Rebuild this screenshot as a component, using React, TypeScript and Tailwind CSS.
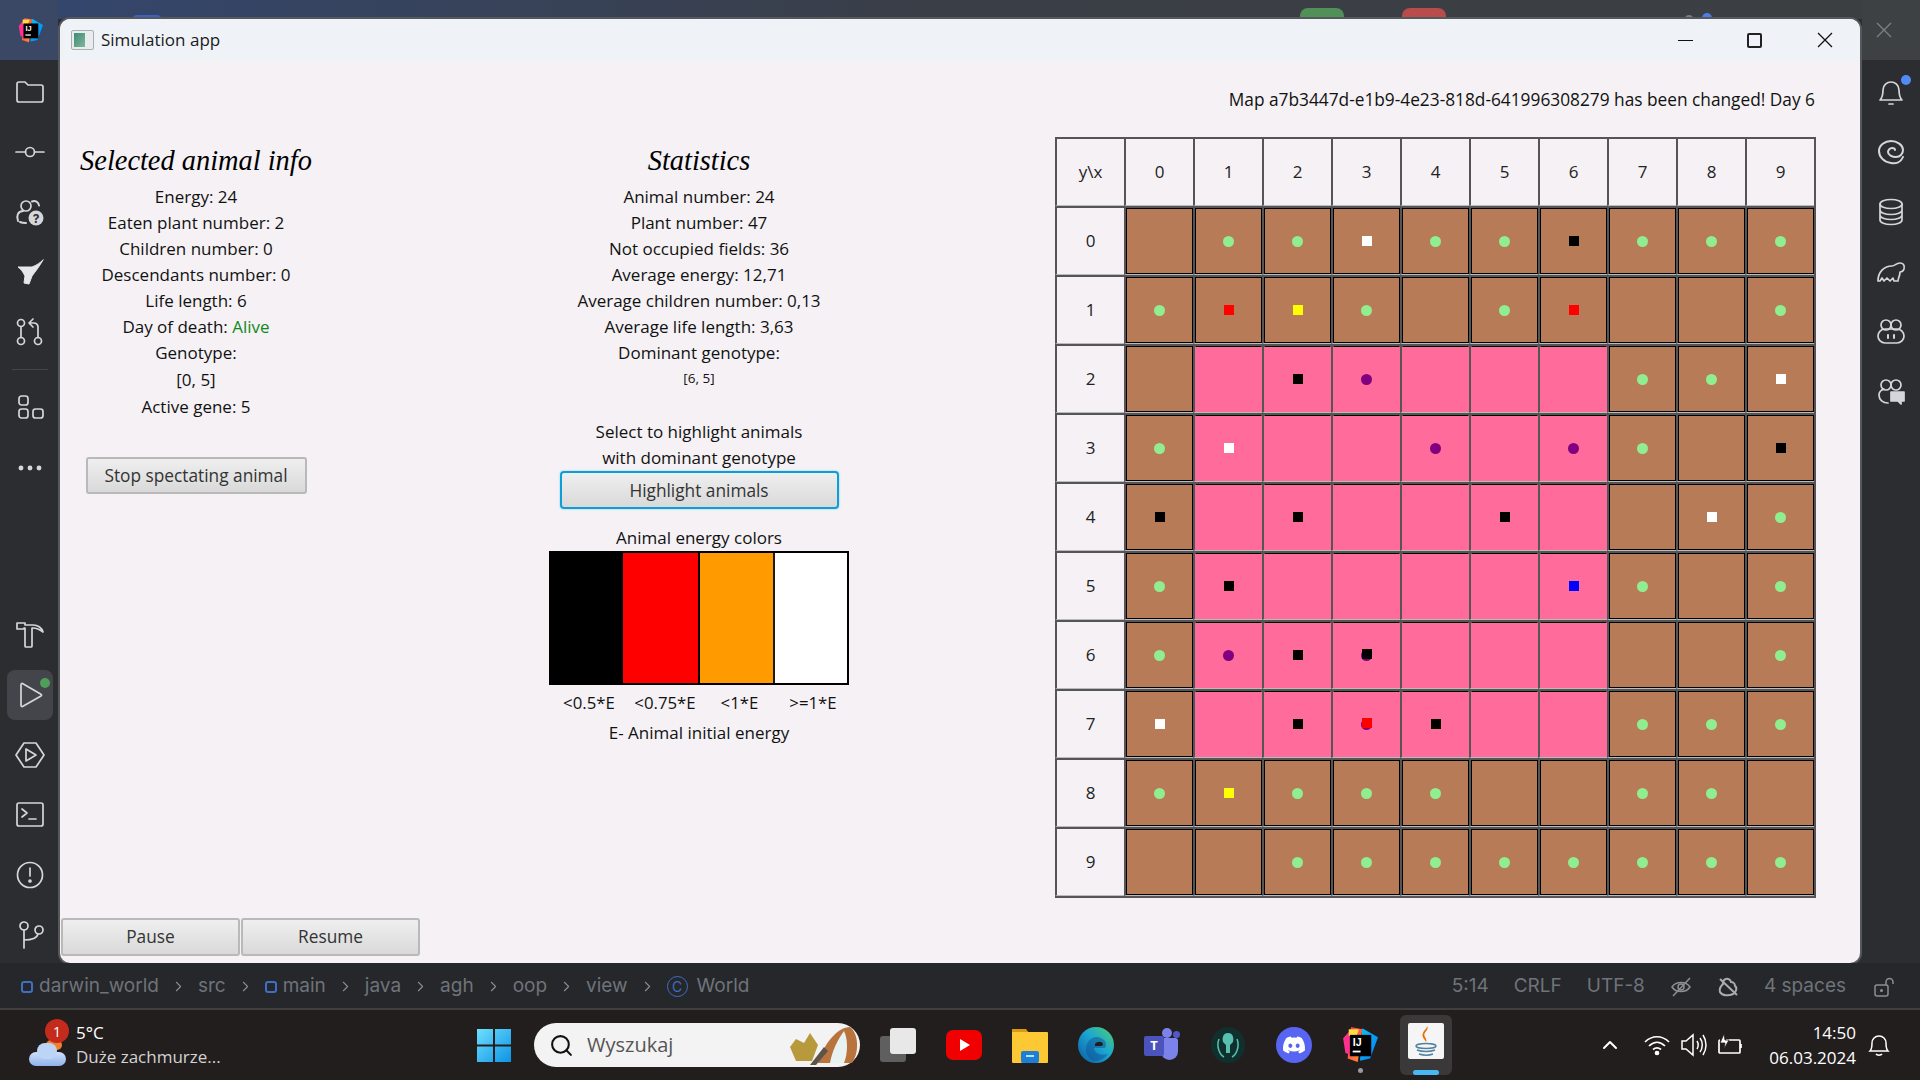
import type { ReactNode } from "react";
import { FaDiscord } from "react-icons/fa";
import { ChevronRight, ChevronUp, Search } from "lucide-react";

const ICON = "#d4d6db";

// g plant, p purple animal, letters = animal energy colour, + pink jungle
const MAP = [
  [".", "g", "g", "w", "g", "g", "k", "g", "g", "g"],
  ["g", "r", "y", "g", ".", "g", "r", ".", ".", "g"],
  [".", "+", "+k", "+p", "+", "+", "+", "g", "g", "w"],
  ["g", "+w", "+", "+", "+p", "+", "+p", "g", ".", "k"],
  ["k", "+", "+k", "+", "+", "+k", "+", ".", "w", "g"],
  ["g", "+k", "+", "+", "+", "+", "+b", "g", ".", "g"],
  ["g", "+p", "+k", "+pk", "+", "+", "+", ".", ".", "g"],
  ["w", "+", "+k", "+pr", "+k", "+", "+", "g", "g", "g"],
  ["g", "y", "g", "g", "g", ".", ".", "g", "g", "."],
  [".", ".", "g", "g", "g", "g", "g", "g", "g", "g"],
];

function Mark({ code }: { code: string }) {
  const kind = code.replace("+", "");
  if (kind === "g") return <span className="h-[11px] w-[11px] rounded-full bg-[#90ee90]" />;
  if (kind === "p") return <span className="h-[11px] w-[11px] rounded-full bg-[#800080]" />;
  if (kind === "pk" || kind === "pr") {
    return (
      <span className="relative h-[11px] w-[11px] rounded-full bg-[#800080]">
        <span className={`absolute left-[1px] top-[-1px] h-[10px] w-[10px] ${kind === "pk" ? "bg-black" : "bg-[#ff0000]"}`} />
      </span>
    );
  }
  if (kind === "k") return <span className="ml-[1px] mt-[-1px] h-[10px] w-[10px] bg-black" />;
  if (kind === "w") return <span className="ml-[1px] mt-[-1px] h-[10px] w-[10px] bg-white" />;
  if (kind === "r") return <span className="ml-[1px] mt-[-1px] h-[10px] w-[10px] bg-[#ff0000]" />;
  if (kind === "y") return <span className="ml-[1px] mt-[-1px] h-[10px] w-[10px] bg-[#ffff00]" />;
  if (kind === "b") return <span className="ml-[1px] mt-[-1px] h-[10px] w-[10px] bg-[#0000ff]" />;
  return null;
}

function HeaderCell({ label }: { label: string }) {
  return (
    <div className="flex items-center justify-center border-l-2 border-t-2 border-b border-l-[#555555] border-t-[#555555] border-b-[#bbbbbb] text-[17px] text-[#222222]">
      {label}
    </div>
  );
}

function MapCell({ code }: { code: string }) {
  const jungle = code.startsWith("+");
  return (
    <div className="border-l-2 border-t-2 border-b border-l-[#555555] border-t-[#555555] border-b-[#bbbbbb]">
      <div
        className={`flex h-full w-full items-center justify-center border ${
          jungle ? "border-transparent border-t-black bg-[#ff6b9b]" : "border-black bg-[#b87b57]"
        }`}
      >
        <Mark code={code} />
      </div>
    </div>
  );
}

function MapGrid() {
  const heads = ["0", "1", "2", "3", "4", "5", "6", "7", "8", "9"];
  return (
    <div className="grid w-[761px] grid-cols-[repeat(11,69px)] grid-rows-[repeat(11,69px)] border-b-2 border-r-2 border-[#555555]">
      <HeaderCell label="y\x" />
      {heads.map((h) => (
        <HeaderCell key={h} label={h} />
      ))}
      {MAP.map((row, y) => (
        <div key={y} className="contents">
          <HeaderCell label={String(y)} />
          {row.map((code, x) => (
            <MapCell key={x} code={code} />
          ))}
        </div>
      ))}
    </div>
  );
}

function FxButton({ children, className }: { children: ReactNode; className: string }) {
  return (
    <button className={`rounded-[3px] border-2 border-[#b9b9b9] bg-gradient-to-b from-[#efefef] to-[#d9d9d9] text-[17.3px] text-[#333333] ${className}`}>
      {children}
    </button>
  );
}

function Heading({ children }: { children: ReactNode }) {
  return <h2 className="pt-[1px] font-['Liberation_Serif',serif] text-[28.4px] italic leading-[46px] text-black">{children}</h2>;
}

function LeftInfo() {
  const lines = ["Energy: 24", "Eaten plant number: 2", "Children number: 0", "Descendants number: 0", "Life length: 6"];
  return (
    <div className="flex w-[272px] flex-col items-center">
      <Heading>Selected animal info</Heading>
      {lines.map((l) => (
        <p key={l} className="h-[26px] leading-[26px]">{l}</p>
      ))}
      <p className="h-[26px] leading-[26px]">
        Day of death: <span className="text-[#0f8a1c]">Alive</span>
      </p>
      <p className="h-[26px] leading-[26px]">Genotype:</p>
      <p className="h-[27px] leading-[27px]">[0, 5]</p>
      <p className="h-[28px] leading-[28px]">Active gene: 5</p>
      <FxButton className="mt-[36px] h-[37px] w-[221px]">Stop spectating animal</FxButton>
    </div>
  );
}

function Stats() {
  const lines = [
    "Animal number: 24",
    "Plant number: 47",
    "Not occupied fields: 36",
    "Average energy: 12,71",
    "Average children number: 0,13",
    "Average life length: 3,63",
    "Dominant genotype:",
  ];
  return (
    <div className="flex w-[320px] flex-col items-center">
      <Heading>Statistics</Heading>
      {lines.map((l) => (
        <p key={l} className="h-[26px] leading-[26px]">{l}</p>
      ))}
      <p className="h-[24px] text-[13.5px] leading-[24px]">[6, 5]</p>
      <p className="mt-[29px] h-[26px] leading-[26px]">Select to highlight animals</p>
      <p className="h-[26px] leading-[26px]">with dominant genotype</p>
      <button className="h-[38px] w-[279px] rounded-[4px] border-2 border-[#0a9fd6] bg-gradient-to-b from-[#efefef] to-[#d9d9d9] pt-[2px] text-[17.3px] text-[#333333] shadow-[0_0_2px_#7fcbe8]">
        Highlight animals
      </button>
      <p className="mt-[16px] h-[26px] leading-[26px]">Animal energy colors</p>
      <div className="flex h-[134px] w-[300px] border-2 border-black">
        <div className="w-[72px] bg-black" />
        <div className="w-[77px] border-r-2 border-black bg-[#ff0000]" />
        <div className="w-[75px] border-r-2 border-[#1a1a1a] bg-[#ff9a00]" />
        <div className="flex-1 bg-white" />
      </div>
      <div className="mt-[5px] flex w-[300px] text-[16.8px]">
        <span className="w-[80px] text-center">&lt;0.5*E</span>
        <span className="w-[72px] text-center">&lt;0.75*E</span>
        <span className="w-[77px] text-center">&lt;1*E</span>
        <span className="w-[70px] text-center">&gt;=1*E</span>
      </div>
      <p className="mt-[5px] leading-[26px]">E- Animal initial energy</p>
    </div>
  );
}

function WindowTitleBar() {
  return (
    <div className="flex h-[42px] shrink-0 items-center rounded-t-[10px] bg-[#eff3f8] pl-[11px]">
      <div className="flex h-[20px] w-[23px] rounded-[2px] border border-[#a8b0b0] bg-[#e8ecec] p-[2px]">
        <div className="h-full w-[11px] bg-gradient-to-br from-[#3d8a78] to-[#7fb89a]" />
      </div>
      <span className="ml-[7px] text-[17px] text-[#1a1a1a]">Simulation app</span>
      <div className="ml-auto flex items-center">
        <span className="mr-[54px] h-[1px] w-[15px] bg-[#111111]" />
        <span className="mr-[55px] h-[15px] w-[15px] rounded-[2px] border-2 border-[#222222]" />
        <svg width="16" height="16" viewBox="0 0 16 16" className="mr-[27px]" stroke="#111111" strokeWidth="1.3">
          <path d="M1 1l14 14M15 1L1 15" />
        </svg>
      </div>
    </div>
  );
}

function SimulationWindow() {
  return (
    <div className="flex min-h-0 flex-1 flex-col rounded-[10px] bg-[#f5f1f5] font-['Open_Sans',sans-serif] text-[17px] text-[#111111] shadow-[0_0_0_2px_#55585c]">
      <WindowTitleBar />
      <p className="mt-[26px] h-[26px] pr-[45px] text-right text-[17.3px] leading-[26px]">
        Map a7b3447d-e1b9-4e23-818d-641996308279 has been changed! Day 6
      </p>
      <div className="mt-[24px] flex flex-1">
        <LeftInfo />
        <div className="ml-[207px]">
          <Stats />
        </div>
        <div className="ml-[196px]">
          <MapGrid />
        </div>
      </div>
      <div className="mb-[7px] flex gap-[1px] pl-[1px]">
        <FxButton className="h-[38px] w-[179px]">Pause</FxButton>
        <FxButton className="h-[38px] w-[179px]">Resume</FxButton>
      </div>
    </div>
  );
}

function Ico({ children, size = 30 }: { children: ReactNode; size?: number }) {
  return (
    <svg width={size} height={size} viewBox="0 0 30 30" fill="none" stroke={ICON} strokeWidth="1.7" strokeLinecap="round" strokeLinejoin="round">
      {children}
    </svg>
  );
}

function Slot({ children, active }: { children: ReactNode; active?: boolean }) {
  return (
    <div className={`relative flex h-[50px] w-[46px] shrink-0 items-center justify-center rounded-[8px] ${active ? "bg-[#43454a]" : ""}`}>
      {children}
    </div>
  );
}

function LeftRail() {
  return (
    <div className="flex w-[58px] shrink-0 flex-col bg-[#2b2d30] pb-[3px]">
      <div className="flex h-[60px] w-full shrink-0 items-center justify-center bg-[#3a4866] pl-[2px]">
        <IjLogo size={25} />
      </div>
      <div className="flex min-h-0 flex-1 flex-col items-center pl-[2px]">
        <div className="mt-[7px] flex flex-col gap-[10px]">
          <Slot>
            <Ico><path d="M2 7a2 2 0 0 1 2-2h6l3 3h13a2 2 0 0 1 2 2v13a2 2 0 0 1-2 2H4a2 2 0 0 1-2-2z" /></Ico>
          </Slot>
          <Slot>
            <Ico><circle cx="15" cy="15" r="4.5" /><path d="M1 15h9.5M19.5 15H29" /></Ico>
          </Slot>
          <Slot>
            <Ico>
              <circle cx="11" cy="9" r="5" />
              <path d="M17 4.500a5 5 0 0 1 7 4M3 24c-2-5 0-10 5-10M5 25c2 1 4 1 6 1" strokeWidth="2" />
              <circle cx="21" cy="21" r="7.500" fill={ICON} stroke="none" />
              <text x="21" y="25.500" textAnchor="middle" fontSize="12" fontWeight="700" fill="#2b2d30" stroke="none" fontFamily="Inter">?</text>
            </Ico>
          </Slot>
          <Slot>
            <Ico><path d="M28 3c-3 3-6 5-11 7L3 10c3 2 5 5 7 9l-1 7 5 1 3-8c3-4 7-9 11-16z" fill="#e6e7ea" stroke="#e6e7ea" strokeWidth="1" /></Ico>
          </Slot>
          <Slot>
            <Ico>
              <circle cx="6" cy="6" r="3.5" /><circle cx="6" cy="24" r="3.5" /><circle cx="23" cy="24" r="3.5" />
              <path d="M6 9.500v11M23 20.500V10a4 4 0 0 0-4-4h-4M18 2l-4 4 4 4" />
            </Ico>
          </Slot>
        </div>
        <div className="mt-[12px] h-[1px] w-[36px] bg-[#43454a]" />
        <div className="mt-[13px] flex flex-col gap-[10px]">
          <Slot>
            <Ico>
              <rect x="4" y="3" width="9" height="9" rx="2.5" /><rect x="4" y="16" width="9" height="9" rx="2.5" /><rect x="18" y="16" width="10" height="9" rx="2.5" />
            </Ico>
          </Slot>
          <Slot>
            <Ico><circle cx="6" cy="15" r="1.6" fill={ICON} /><circle cx="15" cy="15" r="1.6" fill={ICON} /><circle cx="24" cy="15" r="1.6" fill={ICON} /></Ico>
          </Slot>
        </div>
        <div className="flex-1" />
        <div className="flex flex-col gap-[10px]">
          <Slot>
            <Ico><path d="M2 3h8v2h8c5 0 9 3 10 7-4-3-7-4-10-4h-1v18a1 1 0 0 1-1 1h-5a1 1 0 0 1-1-1V8H9v1H2z" /></Ico>
          </Slot>
          <Slot active>
            <Ico><path d="M6 4.500v21a1 1 0 0 0 1.500.9L26 16a1 1 0 0 0 0-1.800L7.500 3.600A1 1 0 0 0 6 4.500z" /></Ico>
            <span className="absolute right-[3px] top-[8px] h-[10px] w-[10px] rounded-full bg-[#4f9e5a]" />
          </Slot>
          <Slot>
            <Ico><path d="M9 3h12l8 12-8 12H9L1 15z" /><path d="M11 9v12l10-6z" /></Ico>
          </Slot>
          <Slot>
            <Ico><rect x="2" y="3" width="26" height="23" rx="2" /><path d="M7 9l5 4-5 4M14 19h7" /></Ico>
          </Slot>
          <Slot>
            <Ico><circle cx="15" cy="15" r="12.500" /><path d="M15 8v8" /><circle cx="15" cy="21" r="1" fill={ICON} /></Ico>
          </Slot>
          <Slot>
            <Ico><circle cx="9" cy="6" r="4" /><circle cx="24" cy="10" r="4" /><path d="M9 10v18M9 20c7 0 13-1 14-6" /></Ico>
          </Slot>
        </div>
      </div>
    </div>
  );
}

function RightRail() {
  return (
    <div className="flex w-[58px] shrink-0 flex-col items-center bg-[#2b2d30]">
      <div className="flex h-[60px] w-full shrink-0 items-center justify-center bg-[#3e4144] pr-[14px]">
        <svg width="16" height="16" viewBox="0 0 16 16" stroke="#7c7f83" strokeWidth="1.4"><path d="M1 1l14 14M15 1L1 15" /></svg>
      </div>
      <div className="mt-[7px] flex flex-col gap-[10px]">
        <Slot>
          <Ico><path d="M4 23c3-3 3-6 3-10 0-5 4-8 8-8 4 0 8 3 8 8 0 4 0 7 3 10zM13 27h4" /></Ico>
          <span className="absolute right-[3px] top-[8px] h-[10px] w-[10px] rounded-full bg-[#548af7]" />
        </Slot>
        <Slot>
          <Ico><path d="M27 20c-2 5-7 7-12 6C8 25 3 20 3 14 3 8 9 4 15 4c6 0 12 4 12 9 0 4-3 7-7 7-4 0-8-2-8-5 0-2 2-4 4-4 2 0 3 1 3 2" strokeWidth="2" /></Ico>
        </Slot>
        <Slot>
          <Ico><ellipse cx="15" cy="7" rx="11" ry="4.500" /><path d="M4 7v16c0 2.500 5 4.500 11 4.500s11-2 11-4.500V7M4 13c0 2.500 5 4.500 11 4.500s11-2 11-4.500M4 18c0 2.500 5 4.500 11 4.500s11-2 11-4.500" /></Ico>
        </Slot>
        <Slot>
          <Ico><path d="M2 24c0-9 6-15 14-15 3 0 4-3 8-3 3 0 5 2 4 6-1 3-3 3-4 3 0 4-2 6-2 9h-4l-1-3-3 3-3-3-3 3-2-3-2 3z" /></Ico>
        </Slot>
        <Slot>
          <Ico>
            <circle cx="10" cy="8" r="5" /><circle cx="20" cy="8" r="5" />
            <rect x="2" y="12" width="26" height="14" rx="7" /><path d="M12 18v3M18 18v3" strokeWidth="2" />
          </Ico>
        </Slot>
        <Slot>
          <Ico>
            <circle cx="10" cy="8" r="5" /><circle cx="20" cy="8" r="5" />
            <path d="M3 18c0 5 4 8 9 8M3 18c0-3 2-5 5-6" />
            <path d="M15 15h13v9h-3v3l-3-3h-7z" fill={ICON} />
          </Ico>
        </Slot>
      </div>
    </div>
  );
}

function Crumb({ children, mod }: { children: ReactNode; mod?: boolean }) {
  return (
    <span className="flex items-center gap-[6px]">
      {mod && <span className="h-[12px] w-[12px] rounded-[3px] border-2 border-[#3d6fc4]" />}
      {children}
    </span>
  );
}

function Sep() {
  return <ChevronRight size={17} strokeWidth={1.5} className="mx-[11px] text-[#8a8e94]" />;
}

function StatusBar() {
  return (
    <div className="flex h-[47px] shrink-0 items-center border-b-2 border-b-[#3f3f3f] bg-[#25272b] pl-[21px] pr-[25px] pt-[2px] font-['Inter',sans-serif] text-[19px] text-[#6f737a]">
      <Crumb mod>darwin_world</Crumb>
      <Sep />
      <Crumb>src</Crumb>
      <Sep />
      <Crumb mod>main</Crumb>
      <Sep />
      <Crumb>java</Crumb>
      <Sep />
      <Crumb>agh</Crumb>
      <Sep />
      <Crumb>oop</Crumb>
      <Sep />
      <Crumb>view</Crumb>
      <Sep />
      <span className="flex items-center gap-[9px]">
        <span className="flex h-[21px] w-[21px] items-center justify-center rounded-full border-[1.5px] border-[#3d6fc4] text-[14px] text-[#3d6fc4]">C</span>
        World
      </span>
      <div className="ml-auto flex items-center gap-[25px]">
        <span>5:14</span>
        <span>CRLF</span>
        <span>UTF-8</span>
        <svg width="22" height="22" viewBox="0 0 22 22" fill="none" stroke="#8c8f94" strokeWidth="1.5">
          <path d="M2 11c4-6 14-6 18 0-4 6-14 6-18 0z" /><circle cx="11" cy="11" r="3" /><path d="M3 20L20 2" />
        </svg>
        <svg width="22" height="22" viewBox="0 0 22 22" fill="none" stroke="#a8abaf" strokeWidth="2">
          <path d="M6 8a4 4 0 0 1 8-2 4 4 0 0 1 4 4c2 1 2 6-2 8-4 2-11 2-13-2-1-3 1-6 3-8zM3 3l17 16" />
        </svg>
        <span className="mr-[2px]">4 spaces</span>
        <svg width="22" height="22" viewBox="0 0 22 22" fill="none" stroke="#8c8f94" strokeWidth="1.5">
          <rect x="2" y="9" width="13" height="11" rx="2" /><path d="M13 9V6a3.500 3.500 0 0 1 7 0v2" /><circle cx="8.500" cy="14.500" r="0.800" />
        </svg>
      </div>
    </div>
  );
}

function IjLogo({ size }: { size: number }) {
  return (
    <svg width={size} height={size} viewBox="0 0 32 32">
      <defs>
        <linearGradient id="ijA" x1="0" y1="0" x2="1" y2="1">
          <stop offset="0" stopColor="#fe2857" />
          <stop offset="1" stopColor="#fe9a2e" />
        </linearGradient>
        <linearGradient id="ijB" x1="0" y1="0" x2="1" y2="1">
          <stop offset="0" stopColor="#07c3f2" />
          <stop offset="1" stopColor="#087cfa" />
        </linearGradient>
      </defs>
      <path d="M8 0l10 2-4 29-9-3z" fill="url(#ijA)" />
      <path d="M18 1l14 8-7 19-9 2z" fill="url(#ijB)" />
      <path d="M1 10l8-9 7 8-7 16-6-2z" fill="#ff318c" />
      <path d="M6 2l9 0-2 6H6z" fill="#fcdc3e" />
      <rect x="7" y="7" width="19" height="19" fill="#000000" />
      <text x="9.500" y="17" fontSize="9.500" fontWeight="700" fill="#ffffff" fontFamily="Liberation Sans">IJ</text>
      <rect x="9.500" y="21" width="7" height="1.600" fill="#ffffff" />
    </svg>
  );
}

function TaskSlot({ children, className = "" }: { children: ReactNode; className?: string }) {
  return <div className={`relative flex h-[70px] w-[66px] shrink-0 items-center justify-center ${className}`}>{children}</div>;
}

function Taskbar() {
  return (
    <div className="flex h-[70px] shrink-0 items-center bg-[#231e1e] font-['Open_Sans',sans-serif] text-white">
      <div className="flex w-[477px] shrink-0 items-center pl-[28px]">
        <div className="relative h-[50px] w-[48px]">
          <span className="absolute left-[18px] top-[20px] h-[10px] w-[16px] rounded-full bg-[#f08030]" />
          <span className="absolute bottom-[4px] left-[1px] h-[14px] w-[37px] rounded-[7px] bg-gradient-to-b from-[#cfe0fa] to-[#8fb3ea]" />
          <span className="absolute bottom-[11px] left-[9px] h-[16px] w-[20px] rounded-full bg-[#bcd4f6]" />
          <span className="absolute left-[17px] top-[-1px] flex h-[24px] w-[24px] items-center justify-center rounded-full bg-[#c42b1c] text-[14px]">1</span>
        </div>
        <div className="flex flex-col text-[17px] leading-[24px]">
          <span>5°C</span>
          <span className="text-[#d2d2d2]">Duże zachmurze...</span>
        </div>
      </div>
      <svg width="34" height="34" viewBox="0 0 34 34" className="shrink-0">
        <defs>
          <linearGradient id="win" x1="0" y1="0" x2="1" y2="1">
            <stop offset="0" stopColor="#6fe0fc" />
            <stop offset="1" stopColor="#0c93e6" />
          </linearGradient>
        </defs>
        <path d="M0 1h16v15.500H0zM18 1h16v15.500H18zM0 18.500h16V34H0zM18 18.500h16V34H18z" fill="url(#win)" />
      </svg>
      <div className="ml-[23px] flex h-[44px] w-[326px] shrink-0 items-center rounded-full bg-[#f3f3f3] pl-[15px] text-[20px] text-[#555555]">
        <Search size={25} strokeWidth={2} className="text-[#111111]" />
        <span className="ml-[13px]">Wyszukaj</span>
        <svg width="76" height="44" viewBox="0 0 76 44" className="ml-auto">
          <path d="M6 24l6-8 8 4 6-10 8 12-6 16H12z" fill="#b89a3c" />
          <path d="M34 40c6-20 20-36 32-36 8 6 10 24 2 36z" fill="#b8743c" />
          <path d="M46 40c2-12 8-24 14-32 4 8 4 22 0 32z" fill="#e8f2f0" />
          <path d="M26 42l14-18 4 4-12 14z" fill="#5c5448" />
        </svg>
      </div>
      <div className="ml-[5px] flex">
        <TaskSlot>
          <span className="relative h-[34px] w-[36px]">
            <span className="absolute bottom-0 left-0 h-[26px] w-[26px] rounded-[3px] bg-[#5f5f5f]" />
            <span className="absolute right-0 top-0 h-[26px] w-[26px] rounded-[3px] bg-[#e8e8e8]" />
          </span>
        </TaskSlot>
        <TaskSlot>
          <svg width="36" height="30" viewBox="0 0 36 30">
            <rect width="36" height="30" rx="7" fill="#f00000" />
            <path d="M14 9l10 6-10 6z" fill="#ffffff" />
          </svg>
        </TaskSlot>
        <TaskSlot>
          <svg width="36" height="36" viewBox="0 0 36 36">
            <path d="M0 2h14l3 4H0z" fill="#d99a12" />
            <rect y="5" width="36" height="31" rx="1" fill="#fcc934" />
            <rect x="9" y="24" width="18" height="12" rx="2" fill="#1d7ed6" />
            <rect x="14" y="28" width="8" height="2" fill="#bde0fa" />
          </svg>
        </TaskSlot>
        <TaskSlot>
          <svg width="36" height="36" viewBox="0 0 36 36">
            <defs>
              <linearGradient id="edge" x1="1" y1="0" x2="0" y2="1">
                <stop offset="0" stopColor="#4fd06a" />
                <stop offset="0.450" stopColor="#1ba7d2" />
                <stop offset="1" stopColor="#0c59a4" />
              </linearGradient>
            </defs>
            <circle cx="18" cy="18" r="18" fill="url(#edge)" />
            <path d="M15 34C8 30 6 22 10 15c3-5 9-6 13-4 5 2 6 7 4 10H16c0 5 6 8 14 6-4 5-10 8-15 7z" fill="#0f4f96" opacity="0.500" />
            <path d="M17 17c2-3 7-3 8 0 0 1-1 2-2 2h-6z" fill="#231e1e" />
          </svg>
        </TaskSlot>
        <TaskSlot>
          <span className="relative h-[34px] w-[36px]">
            <span className="absolute right-[2px] top-[10px] h-[22px] w-[17px] rounded-b-[9px] rounded-t-[3px] bg-[#7b83eb]" />
            <span className="absolute right-[8px] top-0 h-[10px] w-[10px] rounded-full bg-[#7b83eb]" />
            <span className="absolute right-0 top-[3px] h-[7px] w-[7px] rounded-full bg-[#5059c9]" />
            <span className="absolute left-0 top-[8px] flex h-[20px] w-[20px] items-center justify-center rounded-[2px] bg-[#4b53bc] text-[13px] font-bold">T</span>
          </span>
        </TaskSlot>
        <TaskSlot>
          <svg width="34" height="36" viewBox="0 0 34 36">
            <ellipse cx="17" cy="18" rx="17" ry="18" fill="#10302e" />
            <path d="M17 6c5 0 6 5 5 9l-3 3v8h-4v-8l-3-3c-1-4 0-9 5-9z" fill="#59c0b0" />
            <path d="M8 12c-3 8 1 16 5 18M26 12c3 8-1 16-5 18" fill="none" stroke="#59c0b0" strokeWidth="1.5" />
          </svg>
        </TaskSlot>
        <TaskSlot>
          <span className="flex h-[36px] w-[36px] items-center justify-center rounded-full bg-[#5865f2]">
            <FaDiscord size={24} color="#ffffff" />
          </span>
        </TaskSlot>
        <TaskSlot>
          <IjLogo size={36} />
          <span className="absolute bottom-[7px] h-[5px] w-[5px] rounded-full bg-[#9a9a9a]" />
        </TaskSlot>
        <TaskSlot>
          <span className="flex h-[60px] w-[52px] items-start justify-center rounded-[6px] bg-[#3a3838] pt-[8px]">
            <svg width="36" height="36" viewBox="0 0 36 36">
              <rect width="36" height="36" rx="2" fill="#f5f5f5" />
              <path d="M19 3c3 4-5 6-2 11 1 2 2 3 1 5-1-3-5-5-3-9 1-3 4-4 4-7z" fill="#e76f00" />
              <ellipse cx="18" cy="23" rx="10" ry="2.500" fill="none" stroke="#5382a1" strokeWidth="1.500" />
              <path d="M9 27c5 2 13 2 18 0M11 31c5 1.500 10 1.500 14 0" fill="none" stroke="#5382a1" strokeWidth="1.500" />
            </svg>
          </span>
          <span className="absolute bottom-[5px] h-[5px] w-[26px] rounded-full bg-[#47b8f5]" />
        </TaskSlot>
      </div>
      <div className="ml-auto flex items-center pr-[30px]">
        <ChevronUp size={24} strokeWidth={2} />
        <svg width="26" height="22" viewBox="0 0 26 22" fill="none" stroke="#ffffff" strokeWidth="1.700" className="ml-[22px]">
          <path d="M1 8c7-7 17-7 24 0M5 12c5-5 11-5 16 0M9 15.500c3-2.500 5-2.500 8 0" /><circle cx="13" cy="19" r="1.500" fill="#ffffff" />
        </svg>
        <svg width="26" height="24" viewBox="0 0 26 24" fill="none" stroke="#ffffff" strokeWidth="1.500" className="ml-[11px]">
          <path d="M1 8v8h4l7 6V2L5 8zM16 8c1.500 2.500 1.500 5.500 0 8M19 5c3 4 3 10 0 14M22 2c4 6 4 14 0 20" />
        </svg>
        <svg width="26" height="24" viewBox="0 0 26 24" fill="none" stroke="#ffffff" strokeWidth="1.700" className="ml-[10px]">
          <path d="M9 7h13a1 1 0 0 1 1 1v11a1 1 0 0 1-1 1H3a1 1 0 0 1-1-1V8a1 1 0 0 1 1-1M24 11v4" />
          <path d="M7 1L3 10h5l-1 6 5-9H8z" fill="#ffffff" stroke="#231e1e" strokeWidth="0.800" />
        </svg>
        <div className="ml-[26px] flex flex-col items-end text-[17px] leading-[25px]">
          <span>14:50</span>
          <span>06.03.2024</span>
        </div>
        <svg width="22" height="24" viewBox="0 0 22 24" fill="none" stroke="#ffffff" strokeWidth="1.500" className="ml-[12px]">
          <path d="M2 18c2-2 2-5 2-8 0-4 3-7 7-7s7 3 7 7c0 3 0 6 2 8zM8 21c1 1.500 5 1.500 6 0" />
        </svg>
      </div>
    </div>
  );
}

export default function App() {
  return (
    <div className="flex h-screen w-screen flex-col overflow-hidden bg-[#2b2d30]">
      <div className="flex min-h-0 flex-1">
        <LeftRail />
        <div className="flex w-[1804px] shrink-0 flex-col">
          <div className="flex h-[19px] shrink-0 items-end bg-gradient-to-r from-[#34466c] via-[#3a3e46] to-[#3c3f42]">
            <span className="ml-[75px] h-[4px] w-[28px] rounded-t-[6px] bg-[#3f5fc8]" />
            <span className="ml-[1139px] h-[11px] w-[44px] rounded-t-[8px] bg-[#52905a]" />
            <span className="ml-[58px] h-[11px] w-[44px] rounded-t-[8px] bg-[#b84c4c]" />
            <span className="ml-[239px] h-[4px] w-[8px] rounded-t-full bg-[#7a7d80]" />
            <span className="ml-[9px] h-[6px] w-[10px] rounded-t-full bg-[#4f7ce0]" />
          </div>
          <div className="flex min-h-0 flex-1 flex-col px-[2px]">
            <SimulationWindow />
          </div>
        </div>
        <RightRail />
      </div>
      <StatusBar />
      <Taskbar />
    </div>
  );
}
